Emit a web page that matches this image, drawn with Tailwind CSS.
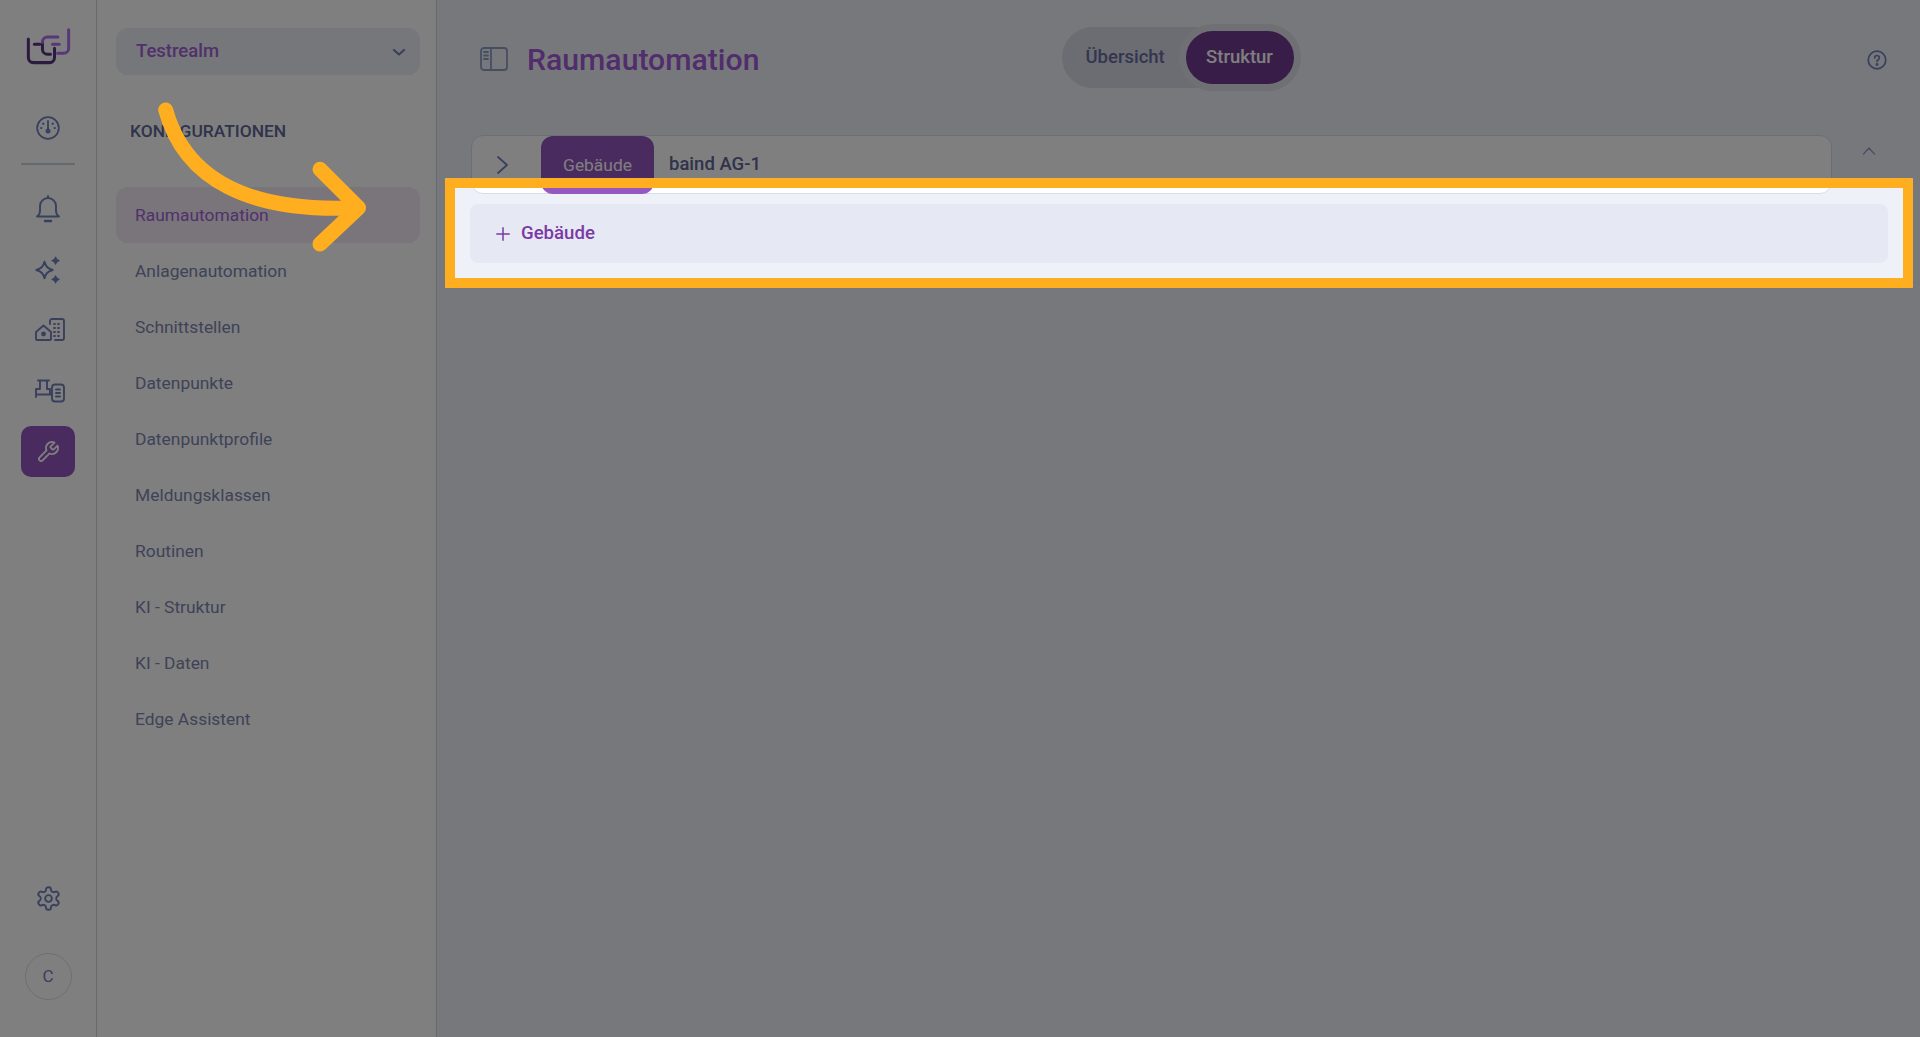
<!DOCTYPE html>
<html lang="en">
<head>
    <meta charset="UTF-8">
    <title>Raumautomation</title>
    <script src="https://cdn.jsdelivr.net/npm/@tailwindcss/browser@4"></script>
</head>
<body class="bg-[#eff1f8] h-[1037px] overflow-hidden font-['Roboto',sans-serif]">
    <div class="relative flex h-[1037px] w-[1920px] overflow-hidden">
        <!-- icon rail -->
        <aside class="w-[97px] shrink-0 bg-white border-r border-[#cbd5e1] flex flex-col items-center text-[#7080ba]">
            <svg class="mt-[28px] w-[47px] h-[37px]" viewBox="30 25 140 110" fill="none" stroke-width="9" stroke-linecap="round" stroke-linejoin="round">
                <path d="M40 58V113a15 15 0 0 0 15 15H103a15 15 0 0 0 15-15V85" stroke="#5a3480"/>
                <path d="M58 73H74" stroke="#5a3480"/>
                <path d="M82 67V88a15 15 0 0 0 15 15H106" stroke="#5a3480"/>
                <path d="M128 52H97a15 15 0 0 0-15 15" stroke="#b070f0"/>
                <path d="M160 30V85a15 15 0 0 1-15 15H127" stroke="#b070f0"/>
                <path d="M132 73H112" stroke="#b070f0"/>
            </svg>
            <svg class="mt-[51px] w-[24px] h-[24px]" viewBox="0 0 24 24" fill="none" stroke="currentColor" stroke-width="1.8" stroke-linecap="round"><circle cx="12" cy="12" r="10.8"/><path d="M12 5v8"/><circle cx="12" cy="15" r="1.6" fill="currentColor"/><path d="M7 7.5l.5.5M17 7.5l-.5.5M5 12h.5M18.5 12h.5"/></svg>
            <div class="mt-[23px] w-[54px] h-[2px] bg-[#cbd5e1]"></div>
            <svg class="mt-[30px] w-[24px] h-[28px]" viewBox="0 0 24 28" fill="none" stroke="currentColor" stroke-width="1.9" stroke-linecap="round" stroke-linejoin="round"><path d="M12 3a8 8 0 0 0-8 8v5c0 2-1 4-3 5.500h22c-2-1.500-3-3.500-3-5.500v-5a8 8 0 0 0-8-8z"/><path d="M12 1v2"/><path d="M9 26h6" stroke-width="2.500"/></svg>
            <svg class="mt-[33px] w-[28px] h-[28px]" viewBox="0 0 24 24" fill="none" stroke="currentColor" stroke-width="1.700" stroke-linejoin="round"><path d="M9 5c1 4 2.500 5.500 7 7-4.500 1.500-6 3-7 7-1-4-2.500-5.500-7-7 4.500-1.500 6-3 7-7z"/><path d="M18.500 1c.5 2 1 2.500 3 3-2 .5-2.500 1-3 3-.5-2-1-2.500-3-3 2-.5 2.500-1 3-3z" fill="currentColor" stroke-width="1"/><path d="M18.500 17c.5 2 1 2.500 3 3-2 .5-2.500 1-3 3-.5-2-1-2.500-3-3 2-.5 2.500-1 3-3z" fill="currentColor" stroke-width="1"/></svg>
            <svg class="mt-[34px] ml-[4px] w-[30px] h-[24px]" viewBox="0 0 30 24" fill="none" stroke="currentColor" stroke-width="1.900" stroke-linecap="round" stroke-linejoin="round"><path d="M1 14l7.500-6.500L16 14v7a1 1 0 0 1-1 1H2a1 1 0 0 1-1-1z"/><circle cx="8.500" cy="16" r="1.500" fill="currentColor"/><path d="M15 6V3a2 2 0 0 1 2-2h10a2 2 0 0 1 2 2v17a2 2 0 0 1-2 2h-7"/><path d="M19 6h1M23 6h1M19 10h1M23 10h1M19 14h1M23 14h1M19 18h1M23 18h1" stroke-width="1.800"/></svg>
            <svg class="mt-[37px] ml-[4px] w-[30px] h-[24px]" viewBox="0 0 30 24" fill="none" stroke="currentColor" stroke-width="1.900" stroke-linecap="round" stroke-linejoin="round"><path d="M3 1.500h11M5 1.500V10H1v8M1 15.500h15M12 1.500V10h3v5"/><rect x="17" y="5.500" width="12" height="17" rx="3"/><path d="M21 10.500h4M21 14h4M21 17.500h4"/></svg>
            <div class="mt-[23px] w-[54px] h-[51px] rounded-[10px] bg-[#9557c0] flex items-center justify-center">
                <svg class="w-[24px] h-[24px]" viewBox="0 0 24 24" fill="none" stroke="#ffffff" stroke-width="1.800" stroke-linecap="round" stroke-linejoin="round"><path d="M14.700 6.300a1 1 0 0 0 0 1.400l1.600 1.600a1 1 0 0 0 1.400 0l3.770-3.770a6 6 0 0 1-7.940 7.940l-6.910 6.910a2.120 2.120 0 0 1-3-3l6.910-6.910a6 6 0 0 1 7.940-7.940l-3.760 3.760z"/></svg>
            </div>
            <svg class="mt-auto w-[27px] h-[27px]" viewBox="0 0 24 24" fill="none" stroke="currentColor" stroke-width="1.700" stroke-linecap="round" stroke-linejoin="round"><path d="M12.220 2h-.44a2 2 0 0 0-2 2v.18a2 2 0 0 1-1 1.730l-.43.25a2 2 0 0 1-2 0l-.15-.08a2 2 0 0 0-2.730.73l-.22.38a2 2 0 0 0 .73 2.730l.15.1a2 2 0 0 1 1 1.720v.51a2 2 0 0 1-1 1.740l-.15.09a2 2 0 0 0-.73 2.730l.22.38a2 2 0 0 0 2.730.73l.15-.08a2 2 0 0 1 2 0l.43.25a2 2 0 0 1 1 1.730V20a2 2 0 0 0 2 2h.44a2 2 0 0 0 2-2v-.18a2 2 0 0 1 1-1.730l.43-.25a2 2 0 0 1 2 0l.15.08a2 2 0 0 0 2.730-.73l.22-.39a2 2 0 0 0-.73-2.730l-.15-.08a2 2 0 0 1-1-1.740v-.5a2 2 0 0 1 1-1.740l.15-.09a2 2 0 0 0 .73-2.730l-.22-.38a2 2 0 0 0-2.730-.73l-.15.08a2 2 0 0 1-2 0l-.43-.25a2 2 0 0 1-1-1.730V4a2 2 0 0 0-2-2z"/><circle cx="12" cy="12" r="3"/></svg>
            <div class="mt-[41px] mb-[37px] w-[47px] h-[47px] rounded-full border border-[#d9dce6] flex items-center justify-center text-[17px]">C</div>
        </aside>

        <!-- menu column -->
        <nav class="w-[340px] shrink-0 bg-white border-r border-[#cbd5e1] pl-[19px] pr-[16px] pt-[28px] text-[#7d86b0]">
            <div class="h-[47px] rounded-xl bg-[#eceef6] flex items-center justify-between pl-[20px] pr-[14px]">
                <span class="text-[18.500px] font-medium text-[#a262d6]">Testrealm</span>
                <svg class="w-[14px] h-[14px]" viewBox="0 0 14 14" fill="none" stroke="#7080ba" stroke-width="2.200" stroke-linecap="round" stroke-linejoin="round"><path d="M2 5l5 4.500L12 5"/></svg>
            </div>
            <div class="mt-[44px] ml-[14px] text-[17.400px] leading-[24px] font-medium text-[#5f6696]">KONFIGURATIONEN</div>
            <ul class="mt-[44px] text-[17.400px]">
                <li class="h-[56px] rounded-xl bg-[#f5e9f6] flex items-center pl-[19px] text-[#a262d6]">Raumautomation</li>
                <li class="h-[56px] flex items-center pl-[19px]">Anlagenautomation</li>
                <li class="h-[56px] flex items-center pl-[19px]">Schnittstellen</li>
                <li class="h-[56px] flex items-center pl-[19px]">Datenpunkte</li>
                <li class="h-[56px] flex items-center pl-[19px]">Datenpunktprofile</li>
                <li class="h-[56px] flex items-center pl-[19px]">Meldungsklassen</li>
                <li class="h-[56px] flex items-center pl-[19px]">Routinen</li>
                <li class="h-[56px] flex items-center pl-[19px]">KI - Struktur</li>
                <li class="h-[56px] flex items-center pl-[19px]">KI - Daten</li>
                <li class="h-[56px] flex items-center pl-[19px]">Edge Assistent</li>
            </ul>
        </nav>

        <!-- main -->
        <main class="flex-1 relative">
            <header class="h-[135px] flex items-start pl-[43px] pr-[33px]">
                <svg class="mt-[47px] w-[28px] h-[24px]" viewBox="0 0 28 24" fill="none" stroke="#8d9cc4" stroke-width="1.800" stroke-linecap="round"><rect x="1" y="1" width="26" height="22" rx="3"/><path d="M11 1v22M4 5h4M4 8.500h4M4 12h4"/></svg>
                <h1 class="ml-[19px] mt-[40px] text-[30.200px] leading-[40px] font-medium text-[#a25ad8]">Raumautomation</h1>
                <div class="ml-[302px] mt-[27px] h-[61px] w-[235px] rounded-full bg-[#d7dbe6] flex items-center pl-[24px] pr-[3px]">
                    <span class="text-[18.500px] font-medium text-[#666ca0] flex-1">Übersicht</span>
                    <span class="h-[53px] w-[108px] rounded-full bg-[#703a92] text-[18.500px] font-medium text-white flex items-center justify-center shadow-[0_0_0_7px_#dde0e9]">Struktur</span>
                </div>
                <svg class="ml-auto mt-[50px] w-[20px] h-[20px]" viewBox="0 0 20 20" fill="none" stroke="#7080ba" stroke-width="1.700" stroke-linecap="round"><circle cx="10" cy="10" r="8.800"/><path d="M7.700 7.800a2.300 2.300 0 1 1 3.500 2c-.8.500-1.200 1-1.200 1.700"/><circle cx="10" cy="14.500" r=".6" fill="#7080ba"/></svg>
            </header>

            <div class="ml-[34px] flex items-start">
                <div class="w-[1361px] h-[59px] rounded-xl bg-white border border-[#d9dde8] flex items-center">
                    <svg class="ml-[23px] w-[16px] h-[20px]" viewBox="0 0 16 20" fill="none" stroke="#7080ba" stroke-width="1.800" stroke-linecap="round" stroke-linejoin="round"><path d="M3 2l9 8-9 8"/></svg>
                    <span class="ml-[30px] self-start w-[113px] h-[58px] rounded-xl bg-[#9557c0] text-white text-[17.400px] flex items-center justify-center">Gebäude</span>
                    <span class="ml-[15px] mt-[1px] text-[18.500px] font-medium text-[#5f6696]">baind AG-1</span>
                </div>
                <svg class="ml-[30px] mt-[11px] w-[14px] h-[10px]" viewBox="0 0 14 10" fill="none" stroke="#94a3c8" stroke-width="1.400" stroke-linecap="round" stroke-linejoin="round"><path d="M1.500 8L7 2l5.500 6"/></svg>
            </div>

            <button class="ml-[33px] mt-[10px] w-[1418px] h-[59px] rounded-lg bg-[#e6e9f3] flex items-center pl-[26px] text-[18.600px] font-medium text-[#7b3aa5]">
                <svg class="w-[14px] h-[14px] mr-[11px]" viewBox="0 0 14 14" fill="none" stroke="#7b3aa5" stroke-width="1.500" stroke-linecap="round"><path d="M7 .8v12.400M.8 7h12.400"/></svg>
                Gebäude
            </button>
        </main>

        <!-- guide overlay: dimmed page with a cut-out round the step target -->
        <div class="absolute left-[445px] top-[178px] w-[1468px] h-[110px] border-[10px] border-[#ffae20] rounded-[2px] shadow-[0_0_0_3000px_rgba(0,0,0,0.5)]"></div>
        <svg class="absolute left-[150px] top-[95px] w-[230px] h-[165px]" viewBox="0 0 230 165" fill="none" stroke="#ffae20" stroke-width="15" stroke-linecap="round" stroke-linejoin="round">
            <path d="M15.700 15C35 85 100 118 208 112.700"/>
            <path d="M170 74.300l38.500 38.400L170 149"/>
        </svg>
    </div>
</body>
</html>
